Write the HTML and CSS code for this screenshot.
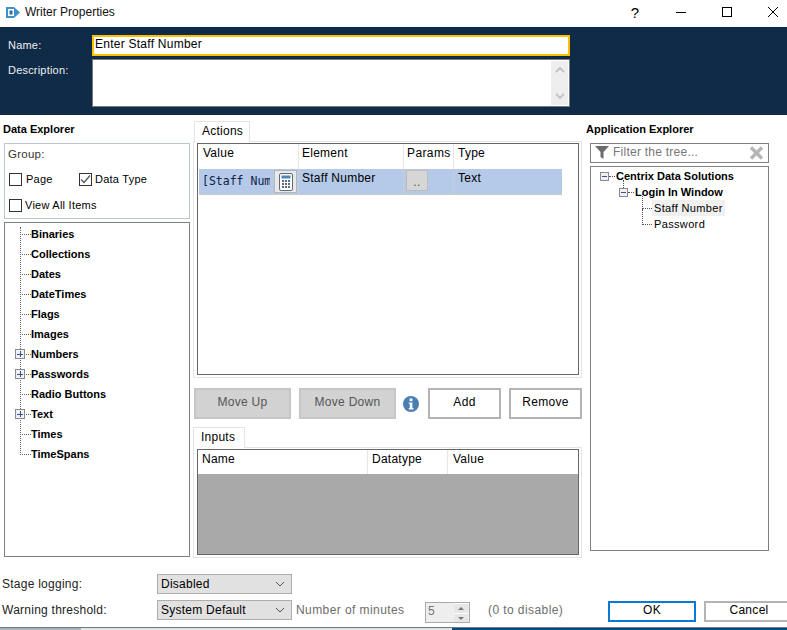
FILE: index.html
```html
<!DOCTYPE html>
<html lang="en">
<head>
<meta charset="utf-8">
<title>Writer Properties</title>
<link rel="stylesheet" href="styles.css">
</head>
<body>
<div class="window">
  <header class="titlebar">
    <svg class="app-icon" width="14" height="13" viewBox="0 0 14 13"><path d="M0 1h8l6 5.5L8 12H0z" fill="#3f8fc9"/><rect x="2" y="3" width="6" height="7" fill="#fff"/><rect x="3.5" y="4.5" width="3" height="4" fill="#2a6ea6"/></svg>
    <span class="title">Writer Properties</span>
    <div class="win-controls">
      <span class="win-btn help">?</span>
      <span class="win-btn"><svg width="12" height="12" viewBox="0 0 12 12"><path d="M1 6.5h10" stroke="#000" fill="none"/></svg></span>
      <span class="win-btn"><svg width="12" height="12" viewBox="0 0 12 12"><rect x="1.5" y="1.5" width="9" height="9" stroke="#000" fill="none"/></svg></span>
      <span class="win-btn"><svg width="12" height="12" viewBox="0 0 12 12"><path d="M1 1l10 10M11 1L1 11" stroke="#000" fill="none"/></svg></span>
    </div>
  </header>

  <section class="head">
    <div class="head-row">
      <label class="head-label">Name:</label>
      <div class="name-input">Enter Staff Number</div>
    </div>
    <div class="head-row">
      <label class="head-label desc-label">Description:</label>
      <div class="desc-input">
        <div class="desc-scroll">
          <svg width="10" height="8" viewBox="0 0 10 8"><path d="M1 6l4-4 4 4" stroke="#c4c4c4" stroke-width="2" fill="none"/></svg>
          <svg width="10" height="8" viewBox="0 0 10 8"><path d="M1 2l4 4 4-4" stroke="#c4c4c4" stroke-width="2" fill="none"/></svg>
        </div>
      </div>
    </div>
  </section>

  <main class="main">
    <aside class="left">
      <h2 class="pane-title">Data Explorer</h2>
      <div class="group-box">
        <div class="group-label">Group:</div>
        <div class="check-row">
          <span class="check-item page-item"><span class="check"></span>Page</span>
          <span class="check-item"><span class="check"><svg width="13" height="13" viewBox="0 0 13 13"><path d="M2 6.5l3 3 6-7" stroke="#555" stroke-width="1.2" fill="none"/></svg></span>Data Type</span>
        </div>
        <div class="check-row"><span class="check-item"><span class="check"></span>View All Items</span></div>
      </div>
      <div class="tree-box data-tree">
        <div class="tree-line"></div>
        <div class="node"><span class="dash"></span>Binaries</div>
        <div class="node"><span class="dash"></span>Collections</div>
        <div class="node"><span class="dash"></span>Dates</div>
        <div class="node"><span class="dash"></span>DateTimes</div>
        <div class="node"><span class="dash"></span>Flags</div>
        <div class="node"><span class="dash"></span>Images</div>
        <div class="node"><span class="plus"></span><span class="dash"></span>Numbers</div>
        <div class="node"><span class="plus"></span><span class="dash"></span>Passwords</div>
        <div class="node"><span class="dash"></span>Radio Buttons</div>
        <div class="node"><span class="plus"></span><span class="dash"></span>Text</div>
        <div class="node"><span class="dash"></span>Times</div>
        <div class="node"><span class="dash"></span>TimeSpans</div>
      </div>
    </aside>

    <section class="center">
      <div class="tab">Actions</div>
      <div class="tab-panel actions-panel">
        <div class="grid">
          <div class="grid-head">
            <div class="col col-value">Value</div>
            <div class="col col-element">Element</div>
            <div class="col col-params">Params</div>
            <div class="col col-type">Type</div>
          </div>
          <div class="grid-row">
            <div class="col row-value value-cell">
              <span class="mono">[Staff Num</span>
              <span class="calc"><svg width="14" height="18" viewBox="0 0 14 18"><rect x=".5" y=".5" width="13" height="17" rx="1.5" fill="#fff" stroke="#5a6b7b"/><rect x="2.5" y="2.5" width="9" height="3" fill="#4f86b8"/><path d="M3 8h2M6 8h2M9 8h2M3 11h2M6 11h2M9 11h2M3 14h2M6 14h2M9 14h2" stroke="#5a6b7b" stroke-width="2"/></svg></span>
            </div>
            <div class="col col-element">Staff Number</div>
            <div class="col col-params params-cell"><span class="dots">..</span></div>
            <div class="col col-type">Text</div>
          </div>
        </div>
      </div>
      <div class="btn-row">
        <button class="btn disabled">Move Up</button>
        <button class="btn disabled">Move Down</button>
        <svg class="info" width="16" height="16" viewBox="0 0 16 16"><circle cx="8" cy="8" r="8" fill="#4a7fb5"/><rect x="6.6" y="2.5" width="2.8" height="2.6" fill="#fff"/><path d="M5.8 6.4h3.6v5.7h1v1.4H5.8v-1.4h1V7.8h-1z" fill="#fff"/></svg>
        <button class="btn add">Add</button>
        <button class="btn remove">Remove</button>
      </div>
      <div class="tab inputs-tab">Inputs</div>
      <div class="tab-panel inputs-panel">
        <div class="grid inputs-grid">
          <div class="grid-head">
            <div class="col col-name">Name</div>
            <div class="col col-datatype">Datatype</div>
            <div class="col col-val">Value</div>
          </div>
          <div class="grid-empty"></div>
        </div>
      </div>
    </section>

    <aside class="right">
      <h2 class="pane-title">Application Explorer</h2>
      <div class="filter">
        <svg width="14" height="13" viewBox="0 0 14 13"><path d="M0 0h14L8.5 6v7l-3-2V6z" fill="#6b6b6b"/></svg>
        <span class="filter-text">Filter the tree...</span>
        <svg class="filter-x" width="15" height="14" viewBox="0 0 15 14"><path d="M2 1.5l11 11M13 1.5l-11 11" stroke="#b5b5b5" stroke-width="3.4" fill="none"/></svg>
      </div>
      <div class="tree-box app-tree">
        <div class="app-node lvl0"><span class="minus"></span><span class="dash short"></span>Centrix Data Solutions</div>
        <div class="app-node lvl1"><span class="minus"></span><span class="dash short"></span>Login In Window</div>
        <div class="app-node lvl2"><span class="dash"></span><span class="sel">Staff Number</span></div>
        <div class="app-node lvl2"><span class="dash"></span><span class="plain">Password</span></div>
      </div>
    </aside>
  </main>

  <footer class="foot">
    <div class="foot-row">
      <span class="foot-label">Stage logging:</span>
      <span class="select">Disabled<svg width="10" height="6" viewBox="0 0 10 6"><path d="M1 1l4 4 4-4" stroke="#555" fill="none"/></svg></span>
    </div>
    <div class="foot-row second">
      <span class="foot-label">Warning threshold:</span>
      <span class="select">System Default<svg width="10" height="6" viewBox="0 0 10 6"><path d="M1 1l4 4 4-4" stroke="#555" fill="none"/></svg></span>
      <span class="muted minutes">Number of minutes</span>
      <span class="spinner"><span class="spin-val">5</span><span class="spin-btns"><span class="spin up"></span><span class="spin down"></span></span></span>
      <span class="muted zero">(0 to disable)</span>
      <button class="btn ok">OK</button>
      <button class="btn cancel">Cancel</button>
    </div>
  </footer>
  <div class="taskstrip"><span class="strip-a"></span><span class="strip-b"></span><span class="strip-c"></span></div>
</div>
</body>
</html>
```
FILE: styles.css
```css
* { box-sizing: border-box; }
html, body { margin: 0; padding: 0; background: #fff; }
body { width: 787px; height: 630px; overflow: hidden; font-family: "Liberation Sans", Arial, sans-serif; font-size: 12px; letter-spacing: .25px; color: #000; }
.window { width: 787px; height: 630px; display: flex; flex-direction: column; overflow: hidden; }

.titlebar { height: 27px; display: flex; align-items: center; padding: 0 0 3px 6px; flex: none; }
.app-icon { margin-right: 5px; flex: none; }
.title { font-size: 12px; letter-spacing: 0; color: #111; }
.win-controls { margin-left: auto; margin-right: -9px; display: flex; flex: none; }
.win-btn { width: 46px; flex: none; display: flex; justify-content: center; align-items: center; }
.help { font-size: 15px; }

.head { height: 88px; background: #0f2b48; padding: 8px 0 0 8px; flex: none; }
.head-row { display: flex; margin-bottom: 3px; }
.head-label { width: 84px; color: #f0f0f0; padding-top: 4px; font-size: 11px; letter-spacing: .2px; }
.desc-label { padding-top: 5px; }
.name-input { width: 478px; height: 21px; background: #fff; border: 2px solid #fdc000; padding-left: 1px; line-height: 14px; }
.desc-input { width: 478px; height: 48px; background: #fff; border: 1px solid #7a7a7a; display: flex; justify-content: flex-end; padding: 1px; }
.desc-scroll { width: 17px; background: #eee; display: flex; flex-direction: column; justify-content: space-between; align-items: center; padding: 5px 0; }

.main { display: flex; height: 445px; flex: none; }
.left { width: 186px; margin-left: 4px; flex: none; }
.pane-title { font-size: 11px; font-weight: bold; letter-spacing: 0; margin: 7px 0 7px -1px; line-height: 14px; height: 14px; }
.group-box { height: 76px; border: 1px solid #bcc6d0; padding: 2px 4px 3px 3px; font-size: 11px; }
.group-label { color: #333; height: 20px; line-height: 16px; font-size: 11.5px; }
.check-row { display: flex; height: 26px; align-items: center; }
.check-item { display: flex; align-items: center; gap: 3px; }
.check-row .check { margin-left: 1px; }
.page-item { width: 70px; }
.page-item .check { margin-right: 1px; }
.check { width: 13px; height: 13px; border: 1px solid #333; background: #fff; display: block; position: relative; }
.check svg { display: block; margin: -1px; }

.tree-box { background: #fff; border: 1px solid #7f7f7f; }
.data-tree { margin-top: 3px; height: 335px; padding: 1px 0 0 0; position: relative; font-size: 11px; font-weight: bold; letter-spacing: 0; }
.tree-line { position: absolute; left: 15px; top: 4px; height: 226px; border-left: 1px dotted #666; }
.node { height: 20px; line-height: 20px; padding-left: 26px; position: relative; }
.node .dash { position: absolute; left: 15px; top: 10px; width: 11px; border-top: 1px dotted #666; }
.plus { position: absolute; left: 10px; top: 5px; width: 10px; height: 10px; z-index: 1; border: 1px solid #8a8a8a; background: linear-gradient(#3c4f8f,#3c4f8f) center/6px 1px no-repeat, linear-gradient(#3c4f8f,#3c4f8f) center/1px 6px no-repeat, #eef0f4; }

.center { width: 389px; margin-left: 3px; flex: none; padding-top: 6px; }
.tab { width: 56px; height: 21px; margin-left: 1px; background: #fff; border: 1px solid #e4e4e4; border-bottom: 0; padding: 1px 0 0 7px; line-height: 16px; position: relative; z-index: 1; }
.inputs-tab { width: 52px; margin-left: 0; margin-top: 8px; padding-left: 7px; }
.tab-panel { border: 1px solid #e4e4e4; padding: 1px 2px 2px 3px; margin-top: -1px; }
.actions-panel { height: 237px; }
.inputs-panel { height: 111px; }
.grid { height: 100%; border: 1px solid #666; background: #fff; }
.grid-head { display: flex; height: 25px; flex: none; }
.inputs-grid .grid-head { height: 24px; }
.col { padding: 2px 0 0 4px; border-right: 1px solid #e6e6e6; line-height: 15px; }
.col:last-child { border-right: 0; }
.col-value { width: 101px; padding-left: 5px; }
.row-value { width: 100px; }
.col-element { width: 105px; padding-left: 3px; }
.col-params { width: 50px; padding-left: 3px; letter-spacing: .4px; }
.col-type { width: 108px; }
.grid-row { display: flex; height: 26px; width: 363px; margin-left: 1px; background: #b4cae8; border-bottom: 1px solid #c9c9c9; }
.grid-row .col { border-right: 1px solid #c6cfd9; }
.grid-row .col:last-child { border-right: 0; }
.value-cell { display: flex; align-items: center; padding: 0 1px 0 3px; justify-content: space-between; }
.mono { font-family: "DejaVu Sans Mono", monospace; font-size: 11.5px; letter-spacing: 0; color: #10204a; width: 68px; overflow: hidden; white-space: nowrap; margin-bottom: 1px; }
.calc { width: 23px; height: 23px; border: 1px solid #b5b5b5; background: #e9e9e9; display: flex; align-items: center; justify-content: center; flex: none; }
.grid-row .params-cell { padding: 1px 0 0 2px; }
.dots { display: block; width: 22px; height: 21px; background: #d6d6d6; border: 1px solid #bdbdbd; text-align: center; line-height: 22px; color: #555; }

.btn-row { display: flex; align-items: center; height: 31px; margin: 10px 0 0 1px; }
.btn { font: 12px "Liberation Sans", Arial, sans-serif; letter-spacing: .3px; height: 31px; background: #fff; border: 2px solid #b4b4b4; color: #000; padding: 0 0 3px; }
.btn.disabled { width: 97px; background: #d2d2d2; border-color: #c6c6c6; color: #555; margin-right: 8px; }
.info { margin: 0 9px 0 -1px; flex: none; }
.add { width: 73px; margin-right: 8px; }
.remove { width: 73px; }
.col-name { width: 170px; }
.col-datatype { width: 80px; }
.col-val { flex: 1; padding-left: 5px; }
.inputs-grid { display: flex; flex-direction: column; }
.grid-empty { flex: 1; background: #a9a9a9; }

.right { width: 179px; margin-left: 8px; flex: none; }
.right .pane-title { margin-left: -4px; }
.filter { height: 20px; border: 1px solid #808080; display: flex; align-items: center; padding: 0 4px 2px 4px; gap: 4px; color: #777; }
.filter-x { margin-left: auto; flex: none; margin-top: 2px; }
.filter-text { font-size: 12px; }
.app-tree { margin-top: 3px; height: 385px; font-size: 11px; font-weight: bold; letter-spacing: 0; padding-top: 1px; position: relative; }
.app-node { height: 16px; line-height: 16px; display: flex; align-items: center; position: relative; }
.lvl0 { padding-left: 9px; }
.lvl1 { padding-left: 28px; }
.lvl1 .minus { position: relative; }
.lvl1 .minus::before { content: ""; position: absolute; left: 3px; top: -9px; height: 8px; border-left: 1px dotted #555; }
.lvl2 { padding-left: 61px; font-weight: normal; letter-spacing: .35px; }
.lvl2 .sel, .lvl2 .plain { padding: 0 2px; display: block; height: 16px; }
.lvl2 .dash { position: absolute; left: 51px; top: 8px; width: 10px; border-top: 1px dotted #555; }
.lvl2 .dash::before { content: ""; position: absolute; left: 0; bottom: 0; height: 16px; border-left: 1px dotted #555; }
.sel { background: #f0f0f0; }
.minus { width: 9px; height: 9px; flex: none; border: 1px solid #8a8a8a; background: linear-gradient(#3c4f8f,#3c4f8f) center/5px 1px no-repeat, #eef0f4; }
.dash.short { width: 6px; border-top: 1px dotted #555; flex: none; margin-right: 1px; }

.foot { flex: none; height: 67px; font-size: 12px; padding-top: 14px; }
.foot-row { display: flex; align-items: center; height: 20px; }
.foot-row.second { margin-top: 6px; height: 22px; align-items: flex-start; }
.second > span { line-height: 20px; }
.foot-label { width: 157px; padding-left: 2px; color: #222; flex: none; }
.select { width: 135px; height: 20px; flex: none; background: #e1e1e1; border: 1px solid #adadad; display: flex; align-items: center; justify-content: space-between; padding: 0 6px 0 3px; }
.muted { color: #6d6d6d; flex: none; letter-spacing: .42px; }
.minutes { margin-left: 4px; width: 129px; }
.second .spinner { width: 45px; height: 21px; flex: none; margin-top: 2px; background: #eee; border: 1px solid #aaa; display: flex; justify-content: space-between; line-height: 17px; }
.spin-val { padding-left: 2px; color: #777; }
.spin-btns { width: 14px; margin-right: 1px; display: flex; flex-direction: column; }
.spin { flex: 1; background: #e6e6e6; position: relative; border-top: 1px solid #fff; }
.up::after, .down::after { content: ""; position: absolute; left: 4px; top: 3px; border: 3px solid transparent; }
.up::after { border-bottom-color: #777; border-top: 0; }
.down::after { border-top-color: #777; border-bottom: 0; }
.zero { margin-left: 18px; width: 120px; }
.ok { width: 88px; height: 21px; flex: none; margin-top: 1px; border: 2px solid #0a78d7; padding-bottom: 5px; }
.cancel { width: 90px; height: 21px; margin: 1px 0 0 8px; flex: none; padding-bottom: 3px; }

.taskstrip { display: flex; height: 3px; flex: none; border-top: 1px solid #6f7a85; }
.strip-a { width: 81px; background: #a8b4bb; }
.strip-b { width: 371px; background: #e3e3e3; }
.strip-c { flex: 1; background: #004c80; }
```
